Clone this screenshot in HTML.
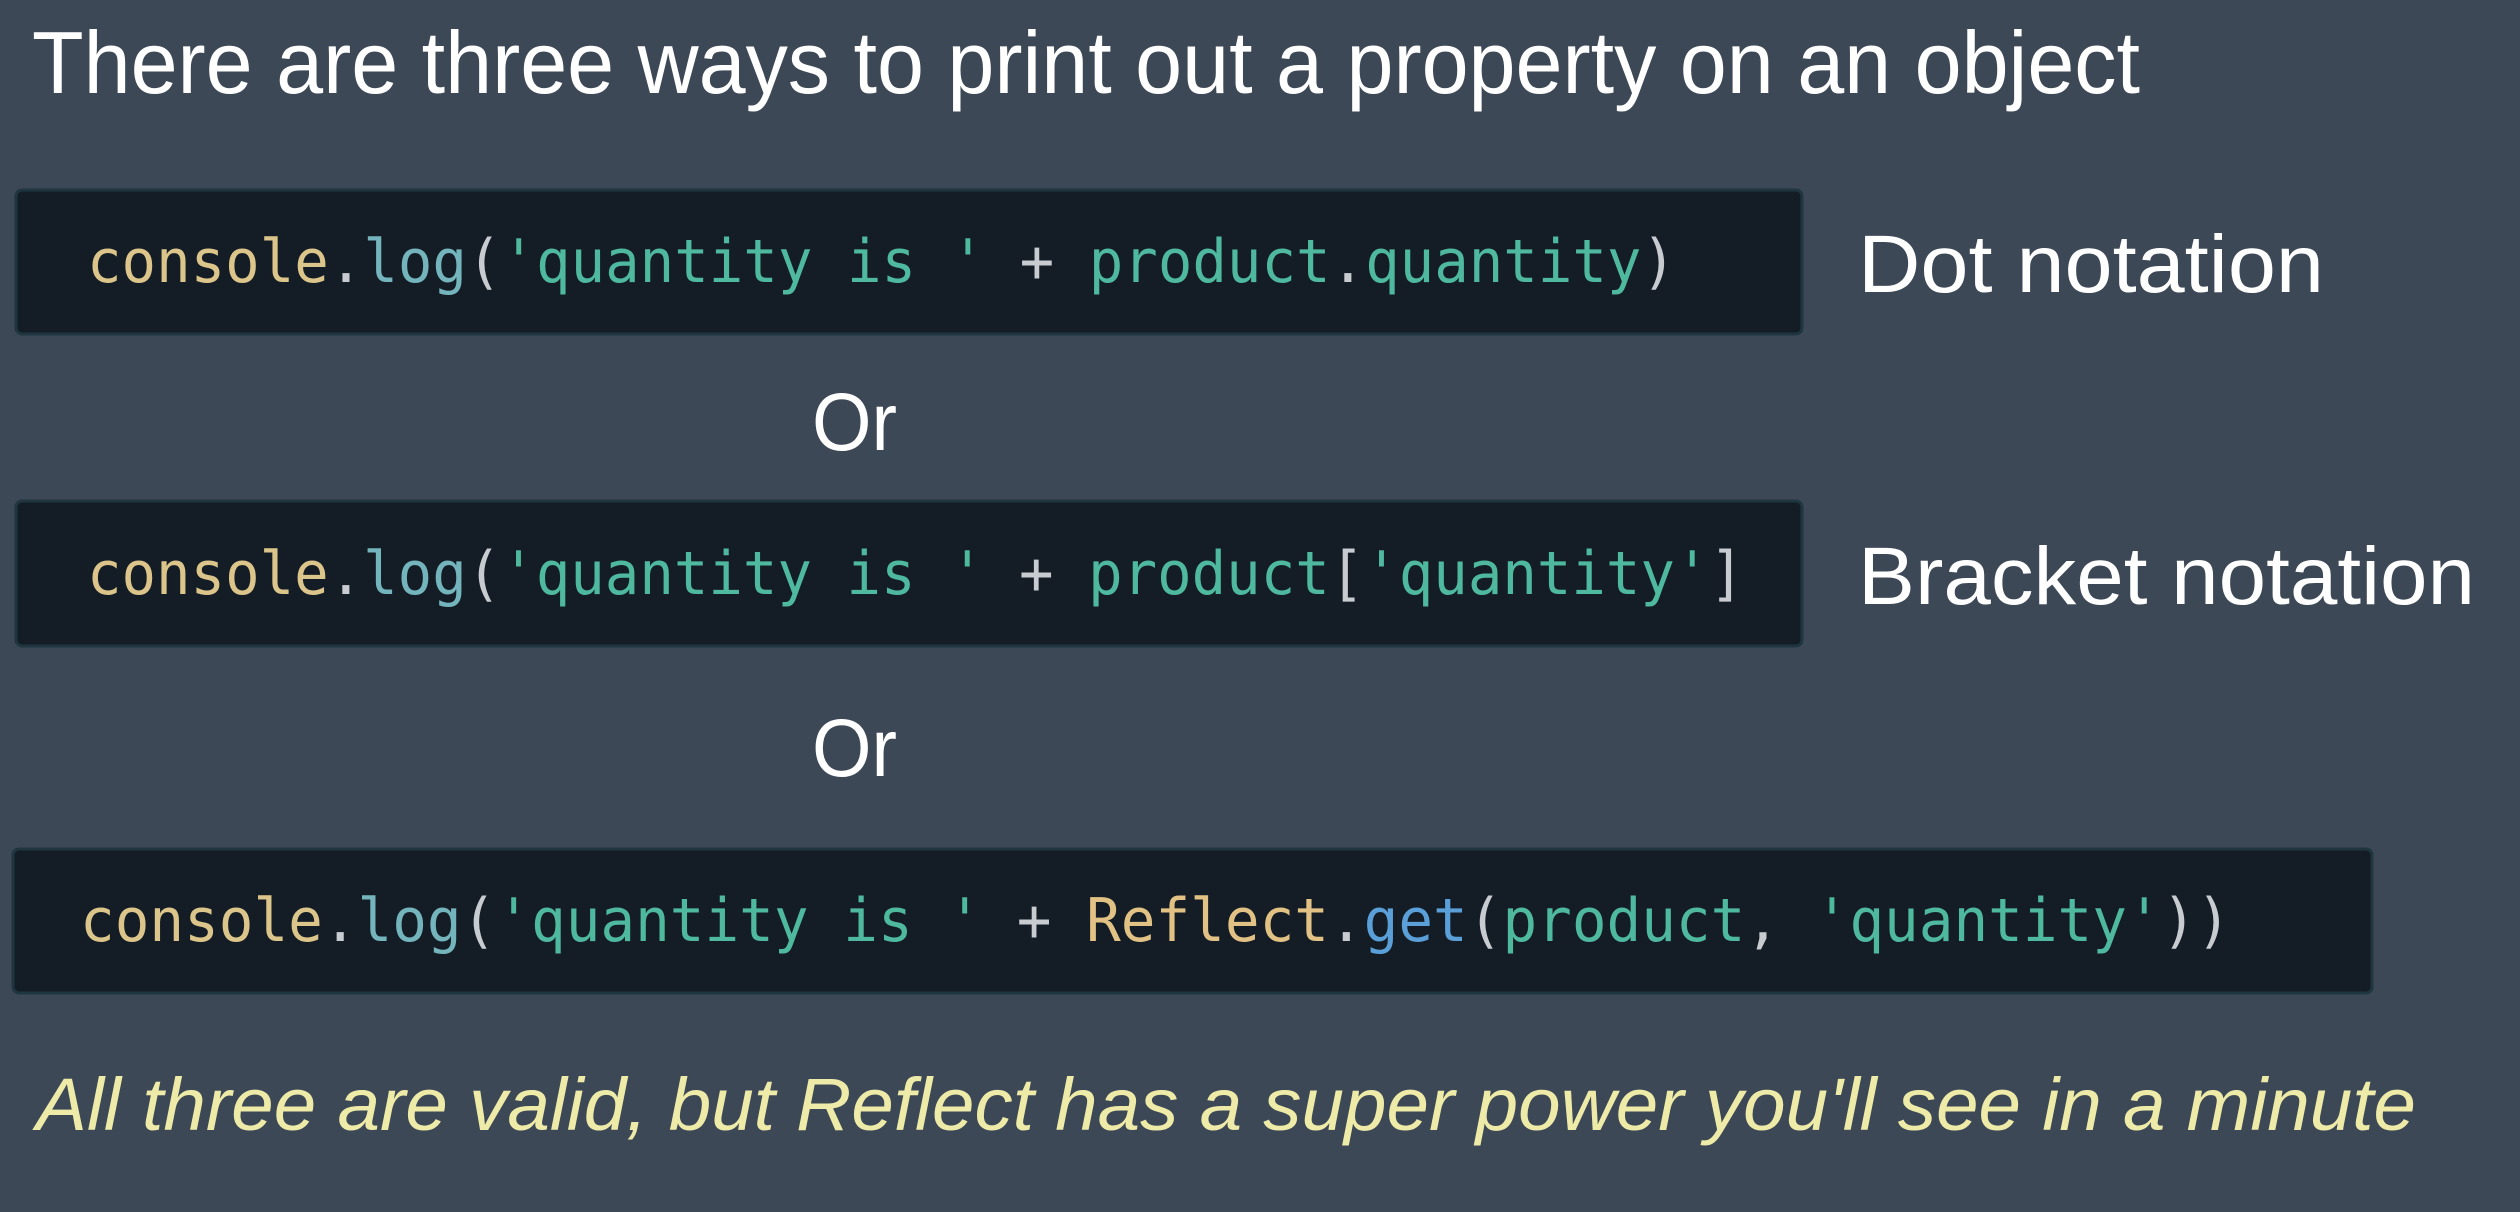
<!DOCTYPE html>
<html><head><meta charset="utf-8"><style>
html,body{margin:0;padding:0;background:#3d4856;width:2520px;height:1212px;overflow:hidden}
</style></head><body>
<svg width="2520" height="1212" viewBox="0 0 2520 1212" xmlns="http://www.w3.org/2000/svg">
<rect width="2520" height="1212" fill="#3d4856"/>
<g font-family="Liberation Sans, sans-serif" fill="#ffffff">
<text x="32" y="93" font-size="88" textLength="2108" lengthAdjust="spacingAndGlyphs">There are three ways to print out a property on an object</text>
<text x="1858" y="292" font-size="82" textLength="466" lengthAdjust="spacingAndGlyphs">Dot notation</text>
<text x="1858" y="604" font-size="82" textLength="617" lengthAdjust="spacingAndGlyphs">Bracket notation</text>
<text x="812" y="450" font-size="82" textLength="85" lengthAdjust="spacingAndGlyphs">Or</text>
<text x="812" y="776" font-size="82" textLength="85" lengthAdjust="spacingAndGlyphs">Or</text>
</g>
<g fill="#141d26" stroke="#1f3640" stroke-width="3">
<rect x="16" y="190" width="1786" height="144" rx="6"/>
<rect x="16" y="501" width="1786" height="145" rx="6"/>
<rect x="13" y="849" width="2359" height="144" rx="6"/>
</g>
<g font-family="DejaVu Sans Mono, Liberation Mono, monospace" font-size="60">
<text x="87" y="282" textLength="1589" lengthAdjust="spacingAndGlyphs"><tspan fill="#dcc58a">console</tspan><tspan fill="#c8ccd0">.</tspan><tspan fill="#74b4bc">log</tspan><tspan fill="#c8ccd0">(</tspan><tspan fill="#4fb9a0">'quantity is '</tspan><tspan fill="#c8ccd0"> + </tspan><tspan fill="#4fb9a0">product</tspan><tspan fill="#c8ccd0">.</tspan><tspan fill="#4fb9a0">quantity</tspan><tspan fill="#c8ccd0">)</tspan></text>
<text x="87" y="594" textLength="1657" lengthAdjust="spacingAndGlyphs"><tspan fill="#dcc58a">console</tspan><tspan fill="#c8ccd0">.</tspan><tspan fill="#74b4bc">log</tspan><tspan fill="#c8ccd0">(</tspan><tspan fill="#4fb9a0">'quantity is '</tspan><tspan fill="#c8ccd0"> + </tspan><tspan fill="#4fb9a0">product</tspan><tspan fill="#c8ccd0">[</tspan><tspan fill="#4fb9a0">'quantity'</tspan><tspan fill="#c8ccd0">]</tspan></text>
<text x="80" y="941" textLength="2151" lengthAdjust="spacingAndGlyphs"><tspan fill="#dcc58a">console</tspan><tspan fill="#c8ccd0">.</tspan><tspan fill="#74b4bc">log</tspan><tspan fill="#c8ccd0">(</tspan><tspan fill="#4fb9a0">'quantity is '</tspan><tspan fill="#c8ccd0"> + </tspan><tspan fill="#e2c284">Reflect</tspan><tspan fill="#c8ccd0">.</tspan><tspan fill="#5a9fd8">get</tspan><tspan fill="#c8ccd0">(</tspan><tspan fill="#4fb9a0">product</tspan><tspan fill="#c8ccd0">, </tspan><tspan fill="#4fb9a0">'quantity'</tspan><tspan fill="#c8ccd0">))</tspan></text>
</g>
<text x="36" y="1130" font-family="Liberation Sans, sans-serif" font-style="italic" font-size="74" fill="#eeeba8" textLength="2380" lengthAdjust="spacingAndGlyphs">All three are valid, but Reflect has a super power you'll see in a minute</text>
</svg>
</body></html>
